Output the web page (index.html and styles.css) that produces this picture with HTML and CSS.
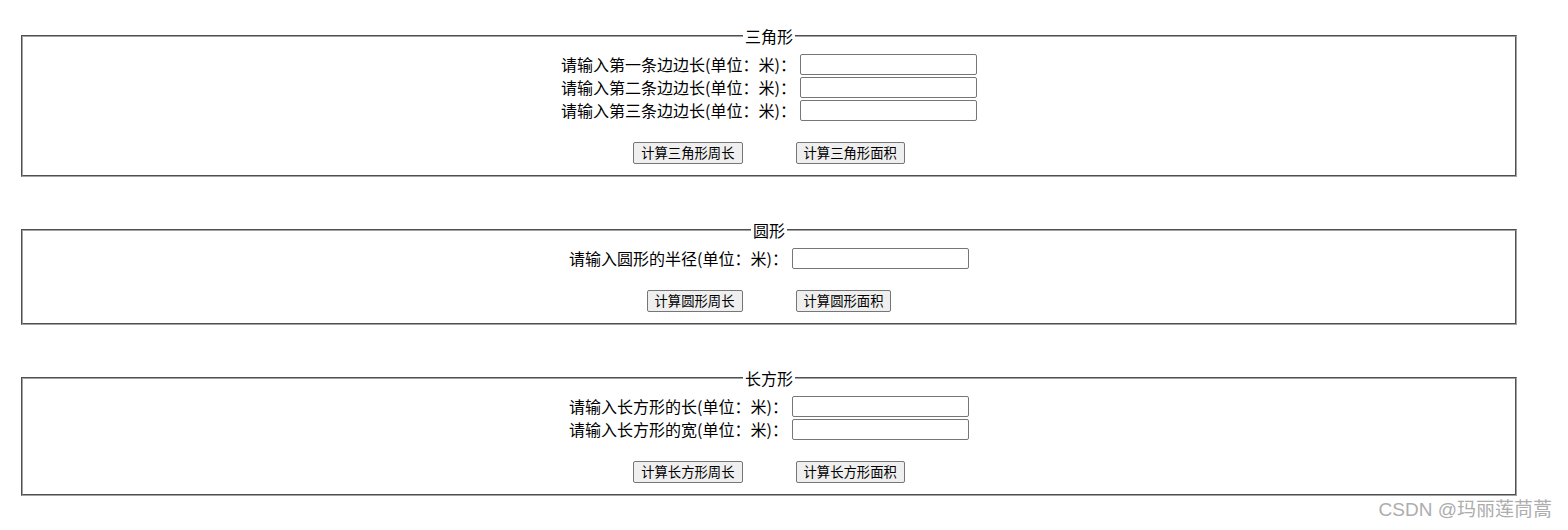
FILE: index.html
```html
<!DOCTYPE html>
<html lang="zh-CN">
<head>
<meta charset="utf-8">
<title>图形计算</title>
<link rel="stylesheet" href="styles.css">
</head>
<body>
<div class="page">
  <fieldset class="shape">
    <legend class="shape-title">三角形</legend>
    <div class="fields">
      <div class="field"><label class="field-label">请输入第一条边边长(单位：米)：</label><input class="field-input" type="text"></div>
      <div class="field"><label class="field-label">请输入第二条边边长(单位：米)：</label><input class="field-input" type="text"></div>
      <div class="field"><label class="field-label">请输入第三条边边长(单位：米)：</label><input class="field-input" type="text"></div>
    </div>
    <div class="actions">
      <button class="btn" type="button">计算三角形周长</button>
      <button class="btn" type="button">计算三角形面积</button>
    </div>
  </fieldset>

  <fieldset class="shape">
    <legend class="shape-title">圆形</legend>
    <div class="fields">
      <div class="field"><label class="field-label">请输入圆形的半径(单位：米)：</label><input class="field-input" type="text"></div>
    </div>
    <div class="actions">
      <button class="btn" type="button">计算圆形周长</button>
      <button class="btn" type="button">计算圆形面积</button>
    </div>
  </fieldset>

  <fieldset class="shape">
    <legend class="shape-title">长方形</legend>
    <div class="fields">
      <div class="field"><label class="field-label">请输入长方形的长(单位：米)：</label><input class="field-input" type="text"></div>
      <div class="field"><label class="field-label">请输入长方形的宽(单位：米)：</label><input class="field-input" type="text"></div>
    </div>
    <div class="actions">
      <button class="btn" type="button">计算长方形周长</button>
      <button class="btn" type="button">计算长方形面积</button>
    </div>
  </fieldset>
</div>
<div class="watermark">CSDN @玛丽莲茼蒿</div>
</body>
</html>
```

FILE: styles.css
```css
html, body {
  margin: 0;
  padding: 0;
  background: #ffffff;
}

body {
  font-family: "Microsoft YaHei", "Noto Sans CJK SC", "Noto Sans", sans-serif;
  font-size: 16px;
  color: #000000;
  position: relative;
  width: 1568px;
  height: 530px;
  overflow: hidden;
}

.page {
  display: flex;
  flex-direction: column;
  gap: 44px;
  padding: 27px 0 0 21px;
  width: 1496px;
}

.shape {
  margin: 0;
  padding: 9px 12px 11px;
  border: 2px groove #a3a3a3;
  min-width: 0;
}

.shape-title {
  margin: 0 auto;
  padding: 0 2px;
  font-size: 16px;
  line-height: 18px;
}

.fields {
  display: flex;
  flex-direction: column;
  align-items: center;
  gap: 2px;
}

.field {
  display: flex;
  align-items: center;
  gap: 4px;
  height: 21px;
}

.field-label {
  font-size: 16px;
  line-height: 21px;
  white-space: nowrap;
}

.field-input {
  box-sizing: border-box;
  width: 177px;
  height: 21px;
  margin: 0;
  padding: 1px 2px;
  border: 1px solid #767676;
  border-radius: 2px;
  background: #ffffff;
  font-family: inherit;
  font-size: 13px;
}

.actions {
  display: flex;
  justify-content: center;
  gap: 53px;
  margin-top: 21px;
}

.btn {
  box-sizing: border-box;
  height: 22px;
  margin: 0;
  padding: 0 7px;
  border: 1px solid #767676;
  border-radius: 2px;
  background: #efefef;
  color: #000000;
  font-family: "Microsoft YaHei", "Noto Sans CJK SC", sans-serif;
  font-size: 13.333px;
  line-height: 20px;
  white-space: nowrap;
}

.watermark {
  position: absolute;
  right: 16px;
  top: 499px;
  font-family: "Liberation Sans", "Noto Sans CJK SC", sans-serif;
  font-size: 19px;
  line-height: 22px;
  color: #adadad;
  white-space: nowrap;
}
```
